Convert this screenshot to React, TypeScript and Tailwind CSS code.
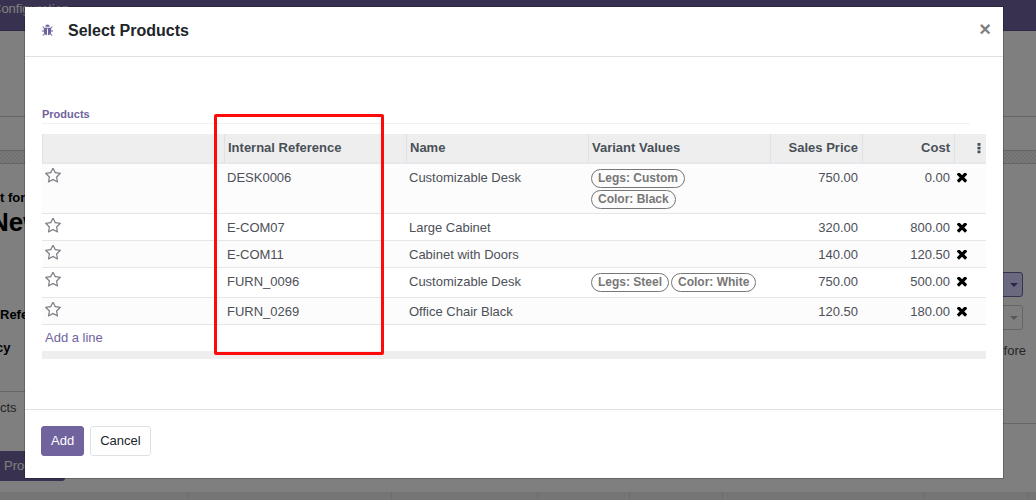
import React from "react";

const STAR =
  "M1201 1004l306-297-422-62-189-382-189 382-422 62 306 297-73 421 378-199 377 199zm527-357q0 22-26 48l-363 354 86 500q1 7 1 20 0 50-41 50-19 0-40-12l-449-236-449 236q-22 12-40 12-21 0-31.5-14.5t-10.5-35.5q0-6 2-20l86-500-364-354q-25-27-25-48 0-37 56-46l502-73 225-455q19-41 49-41t49 41l225 455 502 73q56 9 56 46z";
const TIMES =
  "M1490 1322q0 40-28 68l-136 136q-28 28-68 28t-68-28l-294-294-294 294q-28 28-68 28t-68-28l-136-136q-28-28-28-68t28-68l294-294-294-294q-28-28-28-68t28-68l136-136q28-28 68-28t68 28l294 294 294-294q28-28 68-28t68 28l136 136q28 28 28 68t-28 68l-294 294 294 294q28 28 28 68z";
const BUG =
  "M1696 960q0 26-19 45t-45 19h-224q0 171-67 290l208 209q19 19 19 45t-19 45q-18 19-45 19t-45-19l-198-197q-5 5-15 13t-42 28.5-65 36.5-82 29-97 13v-896h-128v896q-51 0-101.5-13.5t-87-33-66-39-43.5-32.5l-15-14-183 207q-20 21-48 21-24 0-43-16-19-18-20.5-44.5t15.5-46.5l202-227q-58-114-58-274h-224q-26 0-45-19t-19-45 19-45 45-19h224v-294l-173-173q-19-19-19-45t19-45 45-19 45 19l173 173h844l173-173q19-19 45-19t45 19 19 45-19 45l-173 173v294h224q26 0 45 19t19 45zm-480-576h-640q0-133 93.5-226.5t226.5-93.5 226.5 93.5 93.5 226.5z";

type Product = {
  ref: string;
  name: string;
  variants: string[];
  price: string;
  cost: string;
};

const products: Product[] = [
  { ref: "DESK0006", name: "Customizable Desk", variants: ["Legs: Custom", "Color: Black"], price: "750.00", cost: "0.00" },
  { ref: "E-COM07", name: "Large Cabinet", variants: [], price: "320.00", cost: "800.00" },
  { ref: "E-COM11", name: "Cabinet with Doors", variants: [], price: "140.00", cost: "120.50" },
  { ref: "FURN_0096", name: "Customizable Desk", variants: ["Legs: Steel", "Color: White"], price: "750.00", cost: "500.00" },
  { ref: "FURN_0269", name: "Office Chair Black", variants: [], price: "120.50", cost: "180.00" },
];

function Caret() {
  return (
    <svg viewBox="0 0 8 4" className="h-1 w-2" aria-hidden="true">
      <path d="M0 0h8L4 4z" fill="currentColor" />
    </svg>
  );
}

function BackgroundPage() {
  return (
    <div className="absolute inset-0 flex flex-col overflow-hidden bg-white text-[13px] leading-5 text-[#4c4c4c]" aria-hidden="true">
      <div className="flex h-[31px] shrink-0 items-start border-b border-[#5f5286] bg-[#71639e] leading-[18px] text-white">
        <span className="-ml-2">Configuration</span>
      </div>
      <div className="h-[86px] shrink-0 border-b border-[#cccccc]" />
      <div className="h-[33px] shrink-0" />
      <div className="h-[14px] shrink-0 border-y border-[#c8c8c8] bg-[repeating-conic-gradient(#e2e2e2_0_25%,#f2f2f2_0_50%)] bg-[length:4px_4px]" />
      <div className="flex min-h-0 grow justify-between">
        <div className="flex w-[65px] flex-col">
          <b className="mt-6 whitespace-nowrap text-black">t for</b>
          <b className="-ml-2.5 text-[26px] leading-7 text-black">New</b>
          <b className="mt-[69px] text-black">Refe</b>
          <b className="mt-[13px] -ml-1 text-black">cy</b>
          <div className="mt-[33px] border-t border-[#cccccc] pt-1.5">
            <span>cts</span>
          </div>
          <div className="mt-[33px] flex h-[30px] items-center rounded-r-[3px] bg-[#71639e] pl-1 text-white">Products</div>
        </div>
        <div className="flex w-[60px] flex-col pt-[108px]">
          <div className="mr-[13px] flex h-[25px] items-center justify-end rounded-[3px] border border-[#71639e] bg-[#d2d2ff] pr-1 text-[#5a4c86]">
            <Caret />
          </div>
          <div className="mt-2 mr-[13px] flex h-[25px] items-center justify-end rounded-[3px] border border-[#cccccc] pr-1 text-[#b0b0b0]">
            <Caret />
          </div>
          <div className="mt-[11px] mr-2.5 text-right">before</div>
          <div className="mt-[62px] border-t border-[#cccccc]" />
        </div>
      </div>
      <div className="flex h-2 shrink-0 bg-[#eaeaea]">
        <div className="w-[189px] border-r border-[#dadada]" />
        <div className="w-[203px] border-r border-[#dadada]" />
        <div className="w-[146px] border-r border-[#dadada]" />
        <div className="w-[92px] border-r border-[#dadada]" />
        <div className="w-[93px] border-r border-[#dadada]" />
        <div className="w-[201px] border-r border-[#dadada]" />
        <div className="w-[104px] border-r border-[#dadada]" />
      </div>
    </div>
  );
}

function ProductTable() {
  const th = "border-l border-[#dee2e6] px-[3px] py-1 text-left font-bold";
  return (
    <table className="w-full table-fixed border-separate border-spacing-0 text-[13px] leading-5 text-[#4c5058]">
      <colgroup>
        <col />
        <col />
        <col />
        <col />
        <col className="w-[92px]" />
        <col className="w-[92px]" />
        <col className="w-8" />
      </colgroup>
      <thead className="bg-[#eeeeee] text-[#495057]">
        <tr className="[&>th]:border-b-2 [&>th]:border-b-[#e6e9ec]">
          <th className={th} aria-label="Favorite" />
          <th className={th}>Internal Reference</th>
          <th className={th}>Name</th>
          <th className={th}>Variant Values</th>
          <th className="border-l border-[#dee2e6] py-1 pr-1 text-right font-bold">Sales Price</th>
          <th className="border-l border-[#dee2e6] py-1 pr-1 text-right font-bold">Cost</th>
          <th className="border-l border-[#dee2e6] py-1 pr-[5px]">
            <button type="button" aria-label="Optional columns" className="ml-auto flex h-5 items-center">
              <svg viewBox="0 0 4 11" className="h-[11px] w-1" fill="currentColor">
                <rect x="0.5" width="3" height="2.8" rx="0.6" />
                <rect x="0.5" y="3.7" width="3" height="2.8" rx="0.6" />
                <rect x="0.5" y="7.4" width="3" height="2.8" rx="0.6" />
              </svg>
            </button>
          </th>
        </tr>
      </thead>
      <tbody>
        {products.map((p) => (
          <tr key={p.ref} className="align-top odd:bg-[#fcfcfc] [&>td]:border-b [&>td]:border-[#e6e6e6]">
            <td className="px-[3px] pt-1">
              <button type="button" aria-label="Add to favorites" className="block text-[#7c7f85]">
                <svg viewBox="64 100 1664 1664" className="size-4" fill="currentColor">
                  <path d={STAR} />
                </svg>
              </button>
            </td>
            <td className="px-[3px] pt-1 pb-0.5">{p.ref}</td>
            <td className="px-[3px] pt-1 pb-0.5">{p.name}</td>
            <td className="px-[3px]">
              {p.variants.length > 0 && (
                <div className="flex min-h-[29px] flex-wrap content-start gap-0.5 pt-[5px] pb-1">
                  {p.variants.map((v) => (
                    <span key={v} className="h-[19px] rounded-full border border-[#777777] px-1.5 text-[12px] leading-4 font-bold text-[#777777]">
                      {v}
                    </span>
                  ))}
                </div>
              )}
            </td>
            <td className="pt-1 pr-1 pb-0.5 text-right">{p.price}</td>
            <td className="pt-1 pr-1 pb-0.5 text-right">{p.cost}</td>
            <td className="px-[3px] pt-1 pb-0.5">
              <button type="button" aria-label="Remove" className="flex h-5 items-center text-black">
                <svg viewBox="302 430 1188 1188" className="size-2.5" fill="currentColor">
                  <path d={TIMES} />
                </svg>
              </button>
            </td>
          </tr>
        ))}
        <tr>
          <td colSpan={7} className="p-[3px]">
            <a href="#add" className="text-[#71639e]">Add a line</a>
          </td>
        </tr>
      </tbody>
      <tfoot>
        <tr>
          <td colSpan={7} className="h-2 bg-[#eeeeee]" />
        </tr>
      </tfoot>
    </table>
  );
}

export default function App() {
  return (
    <div className="relative h-screen overflow-hidden font-['Liberation_Sans',Arial,sans-serif]">
      <BackgroundPage />
      <div className="relative h-full bg-black/50 pt-1.5 pr-2">
        <div role="dialog" aria-labelledby="dialog-title" className="mx-auto max-w-[980px] border border-black/20 bg-white bg-clip-padding">
          <header className="flex h-[50px] items-center border-b border-[#dee2e6] px-4 pb-0.5">
            <svg viewBox="0 0 1792 1792" className="size-[13px] text-[#71639e]" fill="currentColor" aria-hidden="true">
              <path d={BUG} />
            </svg>
            <h4 id="dialog-title" className="ml-3.5 text-[16px] leading-6 font-bold text-[#212529]">Select Products</h4>
            <button type="button" aria-label="Close" className="-mr-2 mb-1 ml-auto px-1 text-[20px] leading-6 font-bold text-[#7f7f7f]">×</button>
          </header>
          <div className="relative px-4 pt-[50px] pb-[50px]">
            <div className="mx-px">
              <h5 className="mr-4 border-b border-[#f0f0f0] pb-0.5 text-[11px] leading-[14px] font-bold text-[#71639e]">Products</h5>
              <div className="mt-2.5">
                <ProductTable />
              </div>
            </div>
            <div className="pointer-events-none absolute top-[57px] left-[189px] h-[241px] w-[170px] rounded-[2px] border-3 border-[#ff0a0a]" />
          </div>
          <footer className="flex gap-1.5 border-t border-[#dee2e6] px-4 pt-4 pb-[22px] text-[13px] leading-5">
            <button type="button" className="rounded-[3px] border border-[#71639e] bg-[#71639e] px-[9px] py-1 text-white">Add</button>
            <button type="button" className="rounded-[3px] border border-[#dee2e6] bg-white px-[9px] py-1 text-[#212529]">Cancel</button>
          </footer>
        </div>
      </div>
    </div>
  );
}
